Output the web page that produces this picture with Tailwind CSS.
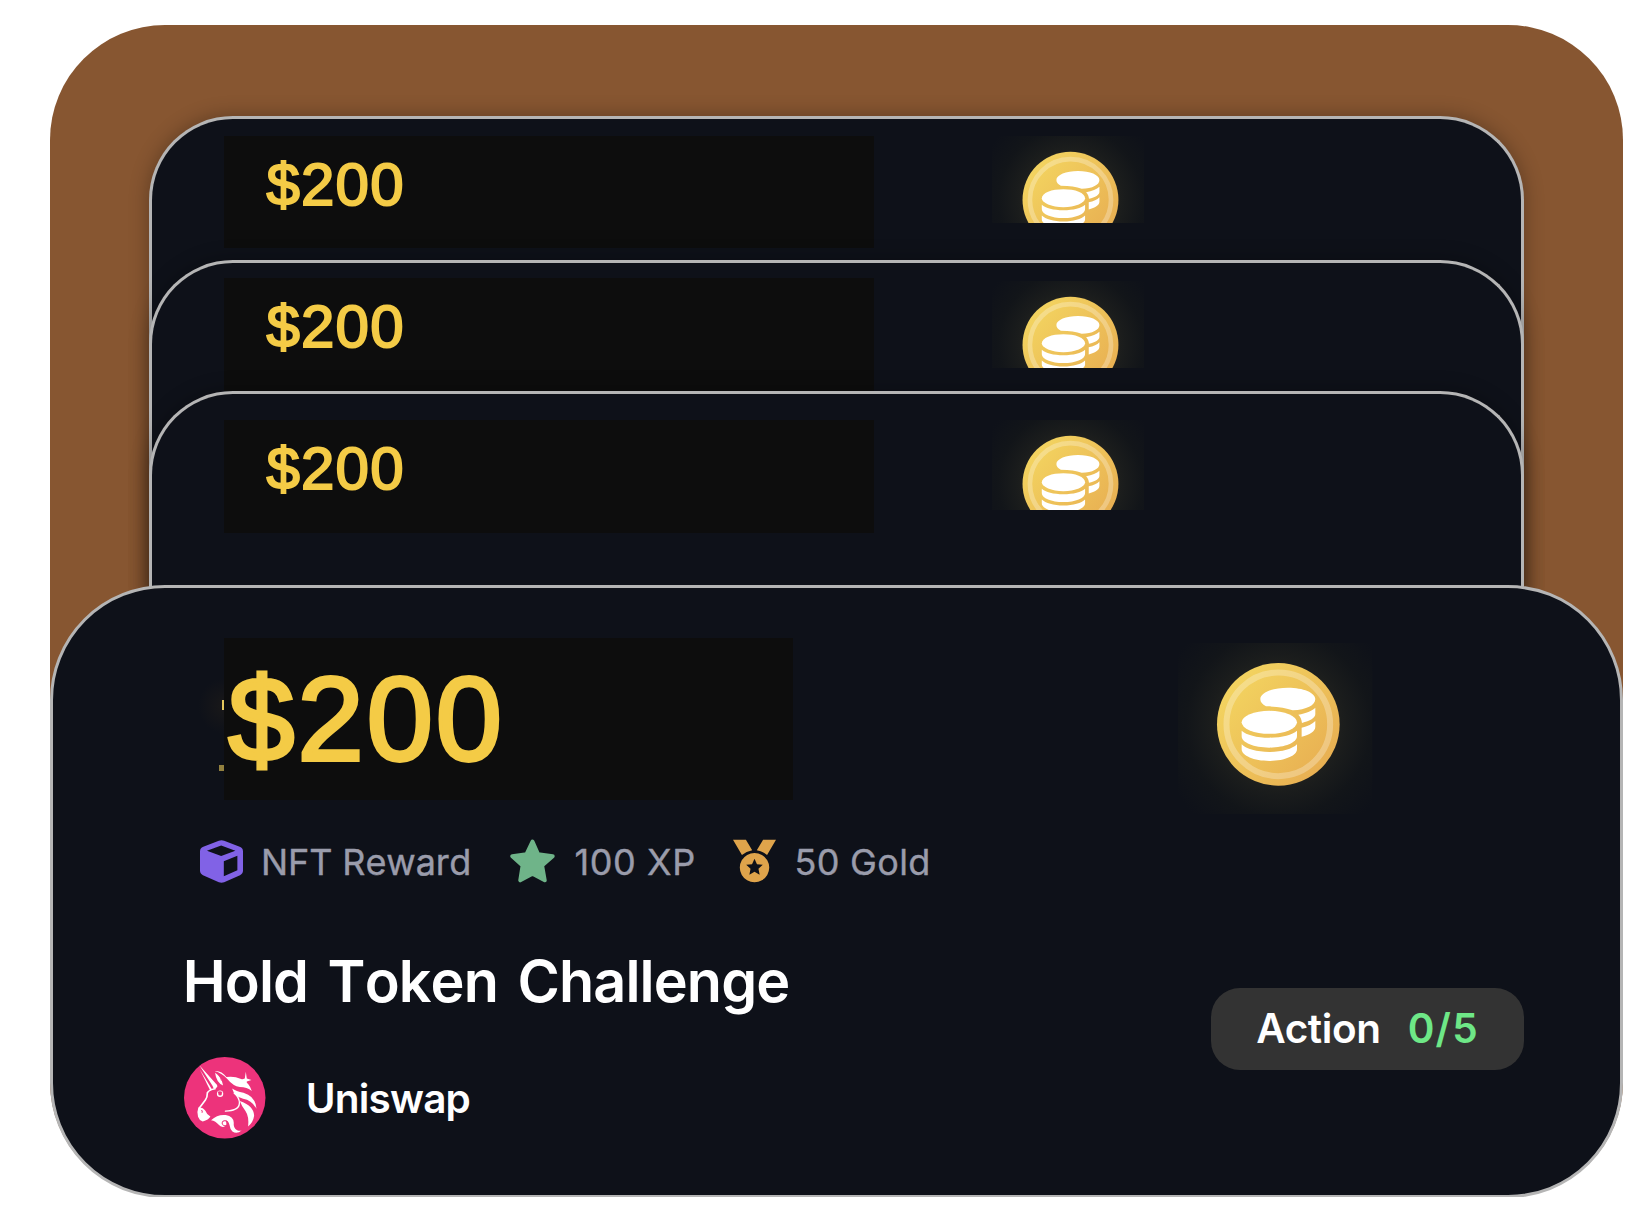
<!DOCTYPE html>
<html lang="en">
<head>
<meta charset="utf-8">
<title>Hold Token Challenge</title>
<script src="https://cdn.jsdelivr.net/npm/@tailwindcss/browser@4"></script>
</head>
<body class="bg-white overflow-hidden font-['Inter',sans-serif]">
<svg class="absolute w-0 h-0">
  <defs>
    <linearGradient id="gold" x1="0.1" y1="0.15" x2="0.9" y2="0.85"><stop offset="0" stop-color="#f3d460"/><stop offset="1" stop-color="#e8af52"/></linearGradient>
    <radialGradient id="glow"><stop offset="0.45" stop-color="#20211e"/><stop offset="0.56" stop-color="#1a1c1c"/><stop offset="0.75" stop-color="#121519"/><stop offset="1" stop-color="#0e1119"/></radialGradient>
    <symbol id="coin" viewBox="85 70 583 513">
      <circle cx="386" cy="314" r="370" fill="url(#glow)"/>
      <circle cx="386" cy="314" r="184" fill="url(#gold)"/>
      <circle cx="386" cy="314" r="155.500" fill="none" stroke="#fff" stroke-opacity=".27" stroke-width="18"/>
      <g fill="#fff">
        <path d="M332 238c0-19 37-34 83-34s82 15 82 34-26 32-68 34c-20-8-46-12-80-12-11-6-17-13-17-22z"/>
        <path d="M497 264v20c0 11-16 20-40 26-1-10-4-18-11-25 23-4 41-11 51-21zM497 304v18c0 13-17 24-41 29v-27c18-4 33-11 41-20z"/>
        <ellipse cx="359" cy="308" rx="83" ry="34.500"/>
        <path d="M276 333c14 13 45 21 83 21s69-8 83-21v17c0 19-37 34-83 34s-83-15-83-34zM276 374c14 14 45 23 83 23s69-9 83-23v15c0 19-37 35-83 35s-83-16-83-35z"/>
      </g>
    </symbol>
  </defs>
</svg>

<main class="ml-[50.3px] mt-[25.3px] w-[1572.400px] h-[1172px] rounded-[115px] bg-[#875631] pt-[90.300px] flex flex-col items-center">
  <section class="w-[1375px] h-[480px] shrink-0 rounded-t-[84px] border-3 border-b-0 border-[#b5b5b5] bg-[#0e1119] shadow-[0_0_20px_rgba(0,0,0,0.3)] flex items-start pl-[72px] pt-[17px]">
    <div class="w-[650px] h-[112.500px] bg-[#0d0d0d] pl-[42.500px] font-['Liberation_Sans',sans-serif] text-[60px] leading-[97px] tracking-[1.200px] text-[#f4cb46] [-webkit-text-stroke:2px_#f4cb46]">$200</div>
    <div class="ml-[118.500px] h-[87.300px] overflow-hidden"><svg class="w-[152px] h-[134px]"><use href="#coin"/></svg></div>
  </section>
  <section class="-mt-[335.300px] w-[1375px] h-[400px] shrink-0 rounded-t-[84px] border-3 border-b-0 border-[#b5b5b5] bg-[#0e1119] shadow-[0_0_20px_rgba(0,0,0,0.3)] flex items-start pl-[72px] pt-[14.300px]">
    <div class="w-[650px] h-[113px] bg-[#0d0d0d] pl-[42.500px] font-['Liberation_Sans',sans-serif] text-[60px] leading-[97px] tracking-[1.200px] text-[#f4cb46] [-webkit-text-stroke:2px_#f4cb46]">$200</div>
    <div class="mt-[3px] ml-[118.500px] h-[87.300px] overflow-hidden"><svg class="w-[152px] h-[134px]"><use href="#coin"/></svg></div>
  </section>
  <section class="-mt-[269px] w-[1375px] h-[260px] shrink-0 rounded-t-[84px] border-3 border-b-0 border-[#b5b5b5] bg-[#0e1119] shadow-[0_0_20px_rgba(0,0,0,0.3)] flex items-start pl-[72px] pt-[26px]">
    <div class="w-[650px] h-[113px] bg-[#0d0d0d] pl-[42.500px] font-['Liberation_Sans',sans-serif] text-[60px] leading-[97px] tracking-[1.200px] text-[#f4cb46] [-webkit-text-stroke:2px_#f4cb46]">$200</div>
    <div class="ml-[118.500px] h-[90px] overflow-hidden"><svg class="w-[152px] h-[134px]"><use href="#coin"/></svg></div>
  </section>

  <section class="relative -mt-[66px] w-full h-[612.400px] shrink-0 rounded-[115px] border-3 border-[#b5b5b5] bg-[#0e1119] pt-[49.500px]">
    <div class="flex items-start pl-[171px]">
      <div class="relative w-[568.700px] h-[162.500px] pl-[4px] bg-[#0d0d0d] font-['Liberation_Sans',sans-serif] text-[119px] leading-[161px] tracking-[3px] text-[#f4cb46] [-webkit-text-stroke:3.800px_#f4cb46]">$200
        <span class="absolute -left-[26px] top-[40px] w-[26px] h-[56px] bg-[radial-gradient(ellipse_at_right,#191819,#0e111900_70%)]"></span>
        <span class="absolute -left-[2px] top-[62px] w-[2px] h-[10px] bg-[#e5c75c]"></span>
        <span class="absolute -left-[5px] top-[127px] w-[5px] h-[6.500px] bg-[#93813f]"></span>
      </div>
      <svg class="ml-[385.500px] mt-[5.500px] w-[194.300px] h-[171px]"><use href="#coin"/></svg>
    </div>

    <div class="flex items-center mt-[2px] pl-[146.700px] h-[90px] text-[36px] leading-[44px] text-[#9a9cab] [font-kerning:none] [-webkit-text-stroke:0.4px_#9a9cab]">
      <svg class="w-[43px] h-[43px]" viewBox="59 60 130 129"><path fill="#8162e6" fill-rule="evenodd" d="M116 62q8-3 16 0l47 18q10 4 10 14v58q0 10-9 14l-48 21q-8 3-16 0l-48-21q-9-4-9-14V94q0-10 10-14zM80 92l43 16 43-16-43-16zM131 124v45l41-18v-44z"/></svg>
      <span class="ml-[18px] mt-[2px] w-[227px] tracking-[-0.100px]">NFT Reward</span>
      <svg class="ml-[22.500px] w-[45px] h-[44px]" viewBox="988 59 136 131"><path fill="#6fb489" stroke="#6fb489" stroke-width="12" stroke-linejoin="round" d="M1056 66l17 38 44 6-32 28 8 45-37-20-37 20 7-45-31-28 43-6z"/></svg>
      <span class="ml-[19px] mt-[2px] w-[135px] tracking-[0.600px]">100 XP</span>
      <svg class="ml-[24px] w-[43px] h-[44px]" viewBox="519 59 130 131"><path fill="#dfa44b" d="M519 60h39l19 32q-18 3-31 14zM649 60h-39l-19 32q18 3 31 14z"/><path fill="#dfa44b" fill-rule="evenodd" d="M584 100a44.500 44.500 0 1 0 .1 0zM584 118l7.500 16 17.500 2-13 12 3.500 18-15.500-9-15.500 9 3.500-18-13-12 17.500-2z"/></svg>
      <span class="ml-[18px] mt-[2px] tracking-[0.300px]">50 Gold</span>
    </div>

    <div class="flex items-start justify-between pl-[131px] pr-[96px]">
      <div class="pt-[39.500px]">
        <h1 class="-ml-[1.500px] text-[57.500px] leading-[70px] font-semibold tracking-[-0.900px] [word-spacing:6px] [font-kerning:none] whitespace-nowrap text-white">Hold Token Challenge</h1>
        <div class="mt-[41.500px] flex items-center gap-[40px]">
          <svg class="w-[81.500px] h-[81.500px]" viewBox="41 54 244 244">
            <circle cx="163" cy="176" r="122" fill="#ed337b"/>
            <g fill="#fff">
              <path d="M87 79l53 59q3 6-3 9l-7 2q-2-8-8-16z"/>
              <path d="M88 91l37 60-5 4z"/>
              <path d="M134 101q20 12 24 38-20-8-24-38z"/>
              <path d="M84 205q14-1 21 10 3 10 15 17-5 10-23 15-11-4-14-14-4-16 1-28z"/>
              <path d="M133 96q20-2 35 18 22-4 44 6 24 10 32 36-14-12-36-12-20-3-38-25-16-17-37-23z"/>
              <path d="M185 148q12 8 34 13 36 10 39 48-14-26-40-30-26-6-33-31z"/>
              <path d="M208 186q42 14 43 44-3 20-18 32 3-30-8-46-11-14-17-30z"/>
              <path d="M122 243q20-18 44-15 24 5 24 23-2 16 10 22 8 3 14 0-14 13-28 4-7-6-9-20-2-12-12-14 8 14-4 20-10 2-16-6-9-12-23-14z"/>
              <path d="M226 98l3 20 14 5-14 4-2 20-4-20-14-4 14-5z"/>
            </g>
            <g fill="none" stroke="#fff" stroke-linecap="round" stroke-linejoin="round">
              <path stroke-width="5" d="M134 149q-18 3-23 12 0 14-6 22l-18 24"/>
              <path stroke-width="4" d="M191 162q16 14 16 30-1 14-14 19-8 4-28 5"/>
              <circle cx="149" cy="164" r="7.500" stroke-width="4"/>
            </g>
            <g fill="none" stroke="#ed337b" stroke-width="3" stroke-linecap="round">
              <path d="M172 252q-2-9-11-7-8 3-5 10 3 6 9 4M94 214q3 3 1 6"/>
              <path d="M143 106q8 8 10 18" stroke-width="2"/>
            </g>
            <path fill="#ed337b" d="M141 158q8-4 15 1l-5 6q-6 1-10-7z"/>
          </svg>
          <span class="mt-[2px] text-[40.500px] leading-[50px] font-semibold tracking-[-0.800px] text-white">Uniswap</span>
        </div>
      </div>
      <div class="mt-[82px] w-[313px] h-[81.500px] rounded-[29px] bg-[#333] flex items-center pl-[45.500px] text-[40.500px] leading-[50px] font-semibold">
        <span class="w-[151.500px] text-white tracking-[-0.400px]">Action</span>
        <span class="text-[#6ee787] tracking-[1.200px]">0/5</span>
      </div>
    </div>
  </section>
</main>
</body>
</html>
